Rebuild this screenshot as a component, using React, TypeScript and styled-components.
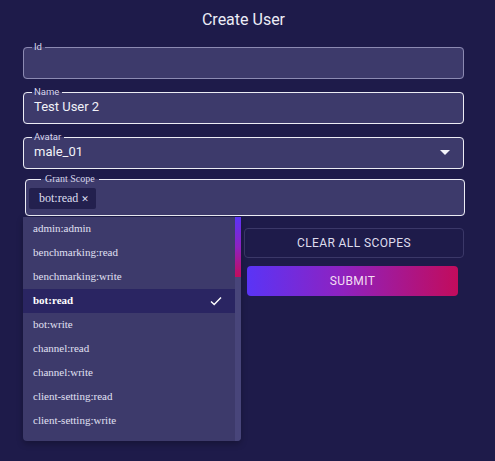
import React from "react";
import styled, { createGlobalStyle } from "styled-components";

const Global = createGlobalStyle`
  html, body { margin: 0; padding: 0; min-height: 100%; }
  body {
    background: #1e1b4a;
    font-family: Roboto, "Liberation Sans", sans-serif;
    color: #ececf6;
  }
`;

const Page = styled.div`
  width: 441px;
  min-height: 451px;
  padding: 10px 31px 0 23px;
`;

const Title = styled.h1`
  margin: 0 0 12px;
  font-size: 16px;
  line-height: 20px;
  font-weight: 400;
  text-align: center;
  color: #ececf6;
`;

const Form = styled.form`
  display: flex;
  flex-direction: column;
`;

const Field = styled.fieldset<{ $active?: boolean; $gap?: number }>`
  margin: ${(p) => p.$gap ?? 0}px 0 0;
  padding: 0 8px;
  min-width: 0;
  border: 1px solid ${(p) => (p.$active ? "#ececf4" : "#8c8ab2")};
  border-radius: 4px;
  background: #3d3a6b;
  position: relative;
`;

const Legend = styled.legend`
  padding: 0 3px 0 2px;
  font-size: 9.5px;
  line-height: 10px;
  color: #d6d5ea;
`;

const Value = styled.div`
  height: 20px;
  line-height: 20px;
  padding: 0 0 6px 2px;
  font-size: 13px;
  color: #f2f2f8;
  display: flex;
  align-items: center;
  justify-content: space-between;
`;

const Arrow = styled.svg`
  width: 24px;
  height: 24px;
  margin-right: -2px;
  fill: #f4f4fa;
`;

const ScopeField = styled.fieldset`
  margin: 5px 0 0 2px;
  width: 440px;
  box-sizing: border-box;
  padding: 0 3px 6px;
  min-width: 0;
  border: 1px solid #ececf4;
  border-radius: 4px;
  background: #3d3a6b;
`;

const ScopeLegend = styled.legend`
  margin-left: 12px;
  padding: 0 4px;
  font-family: "Liberation Serif", serif;
  font-size: 10px;
  line-height: 10px;
  color: #d6d5ea;
`;

const Chip = styled.span`
  margin-top: 4px;
  display: inline-flex;
  align-items: center;
  gap: 3px;
  height: 21px;
  padding: 0 7px 0 10px;
  background: #23204e;
  border-radius: 2px;
  font-family: "Liberation Serif", serif;
  font-size: 12px;
  color: #dedef0;
`;

const ChipX = styled.span`
  font-family: "DejaVu Sans", sans-serif;
  font-size: 9px;
`;

const Row = styled.div`
  position: relative;
  display: grid;
  grid-template-columns: 218px 1fr;
  column-gap: 3px;
  margin-top: 1px;
  min-height: 225px;
`;

const Actions = styled.div`
  grid-column: 2;
  align-self: start;
  display: flex;
  flex-direction: column;
  gap: 8px;
  padding-top: 11px;
`;

const ClearButton = styled.button`
  height: 30px;
  border: 1px solid #3b3868;
  border-radius: 4px;
  background: transparent;
  color: #dedded;
  font-family: Roboto, sans-serif;
  font-size: 12px;
  letter-spacing: 0.4px;
  text-transform: uppercase;
`;

const SubmitButton = styled.button`
  height: 30px;
  margin: 0 6px 0 3px;
  border: none;
  border-radius: 4px;
  background: linear-gradient(90deg, #5a34f6 0%, #8e22c0 45%, #c20c5c 100%);
  color: #f3def2;
  font-family: Roboto, sans-serif;
  font-size: 12px;
  letter-spacing: 0.4px;
  text-transform: uppercase;
`;

const Menu = styled.div`
  position: absolute;
  top: 0;
  left: 0;
  width: 218px;
  height: 224px;
  display: flex;
  background: #3d3a6b;
  border-radius: 0 0 4px 4px;
  overflow: hidden;
  box-shadow: 0 3px 6px rgba(0, 0, 0, 0.25);
`;

const List = styled.ul`
  flex: 1;
  margin: 0;
  padding: 0;
  list-style: none;
`;

const Item = styled.li<{ $selected?: boolean }>`
  height: 24px;
  box-sizing: border-box;
  display: flex;
  align-items: center;
  justify-content: space-between;
  padding: 0 13px 3px 10px;
  font-family: "Liberation Serif", serif;
  font-size: 11px;
  font-weight: ${(p) => (p.$selected ? 700 : 400)};
  color: ${(p) => (p.$selected ? "#ffffff" : "#e0e0f3")};
  background: ${(p) => (p.$selected ? "#2a2562" : "transparent")};
`;

const Track = styled.div`
  width: 6px;
  background: #48457a;
`;

const Thumb = styled.div`
  height: 60px;
  background: linear-gradient(180deg, #5a34f6 0%, #8e22c0 50%, #c20c5c 100%);
`;

const Check = styled.svg`
  width: 12px;
  height: 10px;
  margin-top: 3px;
  fill: none;
  stroke: #ffffff;
  stroke-width: 1.4;
`;

const scopes = [
  "admin:admin",
  "benchmarking:read",
  "benchmarking:write",
  "bot:read",
  "bot:write",
  "channel:read",
  "channel:write",
  "client-setting:read",
  "client-setting:write",
  "client:read",
];

export default function App() {
  const selected = ["bot:read"];
  return (
    <>
      <Global />
      <Page>
        <Title>Create User</Title>
        <Form>
          <Field>
            <Legend>Id</Legend>
            <Value />
          </Field>
          <Field $active $gap={8}>
            <Legend>Name</Legend>
            <Value>Test User 2</Value>
          </Field>
          <Field $active $gap={8}>
            <Legend>Avatar</Legend>
            <Value>
              male_01
              <Arrow viewBox="0 0 24 24">
                <path d="M7 10l5 5 5-5z" />
              </Arrow>
            </Value>
          </Field>
          <ScopeField>
            <ScopeLegend>Grant Scope</ScopeLegend>
            {selected.map((s) => (
              <Chip key={s}>
                {s}
                <ChipX>✕</ChipX>
              </Chip>
            ))}
          </ScopeField>
          <Row>
            <Actions>
              <ClearButton type="button">Clear all scopes</ClearButton>
              <SubmitButton type="button">Submit</SubmitButton>
            </Actions>
            <Menu>
              <List>
                {scopes.map((s) => (
                  <Item key={s} $selected={selected.includes(s)}>
                    {s}
                    {selected.includes(s) && (
                      <Check viewBox="0 0 12 10">
                        <path d="M1 5.5l3.2 3L11 1.5" />
                      </Check>
                    )}
                  </Item>
                ))}
              </List>
              <Track>
                <Thumb />
              </Track>
            </Menu>
          </Row>
        </Form>
      </Page>
    </>
  );
}
